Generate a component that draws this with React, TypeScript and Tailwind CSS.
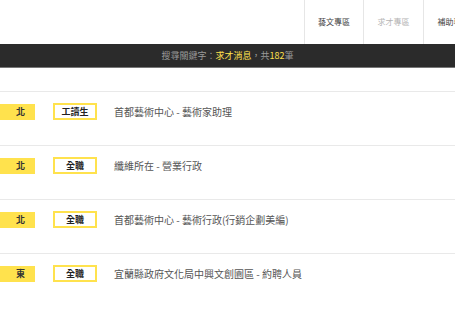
import React from "react"

const jobs = [
  { area: "北", type: "工讀生", title: "首都藝術中心 - 藝術家助理" },
  { area: "北", type: "全職", title: "纖維所在 - 營業行政" },
  { area: "北", type: "全職", title: "首都藝術中心 - 藝術行政(行銷企劃美編)" },
  { area: "東", type: "全職", title: "宜蘭縣政府文化局中興文創園區 - 約聘人員" },
]

const font = { fontFamily: '"Noto Sans CJK TC", "Noto Sans", sans-serif' }

export default function App() {
  return (
    <div className="w-[455px] h-[310px] overflow-hidden bg-white" style={font}>
      <div className="h-[44px] flex pl-[304px] whitespace-nowrap overflow-hidden">
        <div className="w-[59px] shrink-0 border-l border-[#e6e6e6] flex items-center justify-center text-[8px] text-[#444]">藝文專區</div>
        <div className="w-[60px] shrink-0 border-l border-[#e6e6e6] flex items-center justify-center text-[8px] text-[#b5b5b5]">求才專區</div>
        <div className="w-[60px] shrink-0 border-l border-[#e6e6e6] flex items-center justify-center text-[8px] text-[#444]">補助專區</div>
      </div>

      <div className="h-[24px] bg-[#2b2b2b] border-b border-[#777] flex items-center justify-center text-[9px] text-[#9a9a9a]">
        搜尋關鍵字：<span className="text-[#ffe14d]">求才消息</span>，共<span className="text-[#ffe14d]">182</span>筆
      </div>

      <div className="h-[23px]" />

      {jobs.map((job, i) => (
        <div key={i} className="h-[54px] border-t border-[#e9e9e9] pt-[11px]">
          <div className="h-[17px] flex items-center">
            <div className="w-[35px] h-[16px] pl-[6px] bg-[#ffe24d] flex items-center justify-center text-[9px] font-bold text-[#333]">
              {job.area}
            </div>
            <div className="ml-[18px] w-[44px] h-[17px] border-2 border-[#ffe24d] flex items-center justify-center text-[9px] font-bold text-[#222]">
              {job.type}
            </div>
            <div className="ml-[17px] text-[10px] text-[#555] whitespace-nowrap">{job.title}</div>
          </div>
        </div>
      ))}
    </div>
  )
}
